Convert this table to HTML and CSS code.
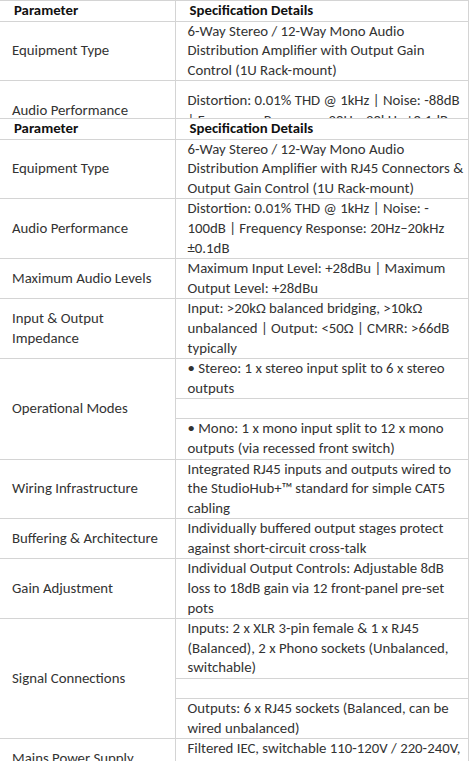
FILE: index.html
```html
<!DOCTYPE html>
<html>
<head>
<meta charset="utf-8">
<link rel="stylesheet" href="styles.css">
</head>
<body>
<div class="clip">
<table class="spec">
<colgroup><col class="c1"><col class="c2"></colgroup>
<tr><th>Parameter</th><th>Specification Details</th></tr>
<tr><td>Equipment Type</td><td>6-Way Stereo / 12-Way Mono Audio Distribution Amplifier with Output Gain Control (1U Rack-mount)</td></tr>
<tr><td>Audio Performance</td><td class="pad">Distortion: 0.01% THD @ 1kHz | Noise: -88dB | Frequency Response: 20Hz–20kHz ±0.1dB</td></tr>
</table>
</div>
<table class="spec">
<colgroup><col class="c1"><col class="c2"></colgroup>
<tr><th>Parameter</th><th>Specification Details</th></tr>
<tr><td>Equipment Type</td><td>6-Way Stereo / 12-Way Mono Audio Distribution Amplifier with RJ45 Connectors &amp; Output Gain Control (1U Rack-mount)</td></tr>
<tr><td>Audio Performance</td><td>Distortion: 0.01% THD @ 1kHz | Noise: -<wbr>100dB | Frequency Response: 20Hz–20kHz ±0.1dB</td></tr>
<tr><td>Maximum Audio Levels</td><td>Maximum Input Level: +28dBu | Maximum Output Level: +28dBu</td></tr>
<tr><td>Input &amp; Output Impedance</td><td>Input: &gt;20kΩ balanced bridging, &gt;10kΩ unbalanced | Output: &lt;50Ω | CMRR: &gt;66dB typically</td></tr>
<tr><td rowspan="3">Operational Modes</td><td>• Stereo: 1 x stereo input split to 6 x stereo outputs</td></tr>
<tr><td class="empty"></td></tr>
<tr><td>• Mono: 1 x mono input split to 12 x mono outputs (via recessed front switch)</td></tr>
<tr><td>Wiring Infrastructure</td><td>Integrated RJ45 inputs and outputs wired to the StudioHub+™ standard for simple CAT5 cabling</td></tr>
<tr><td>Buffering &amp; Architecture</td><td>Individually buffered output stages protect against short-circuit cross-talk</td></tr>
<tr><td>Gain Adjustment</td><td>Individual Output Controls: Adjustable 8dB loss to 18dB gain via 12 front-panel pre-set pots</td></tr>
<tr><td rowspan="3">Signal Connections</td><td>Inputs: 2 x XLR 3-pin female &amp; 1 x RJ45 (Balanced), 2 x Phono sockets (Unbalanced, switchable)</td></tr>
<tr><td class="empty"></td></tr>
<tr><td>Outputs: 6 x RJ45 sockets (Balanced, can be wired unbalanced)</td></tr>
<tr><td>Mains Power Supply</td><td>Filtered IEC, switchable 110-120V / 220-240V, 50/60Hz</td></tr>
<tr><td>Dimensions</td><td>1U 19" rack-mount chassis</td></tr>
</table>
</body>
</html>
```
FILE: styles.css
```css
html, body {
  margin: 0;
  padding: 0;
  background: #ffffff;
}
body {
  font-family: "Carlito", "Lato", "Liberation Sans", sans-serif;
  font-size: 14.8px;
  color: #333333;
}
.clip {
  height: 118px;
  overflow: hidden;
}
.spec {
  border-collapse: collapse;
  width: 468px;
  table-layout: fixed;
}
.c1 { width: 175px; }
.c2 { width: 293px; }
.spec th, .spec td {
  border: 1px solid #d4d4d4;
  padding: 0 1px 0 12px;
  line-height: 19.6px;
  text-align: left;
  vertical-align: middle;
}
.spec th {
  font-weight: bold;
  color: #111111;
  padding-left: 14px;
  height: 19px;
}
.spec tr > :first-child { border-left: none; }
.spec td.pad { padding-top: 10px; padding-bottom: 10px; }
.spec td.empty { height: 19px; }
```
